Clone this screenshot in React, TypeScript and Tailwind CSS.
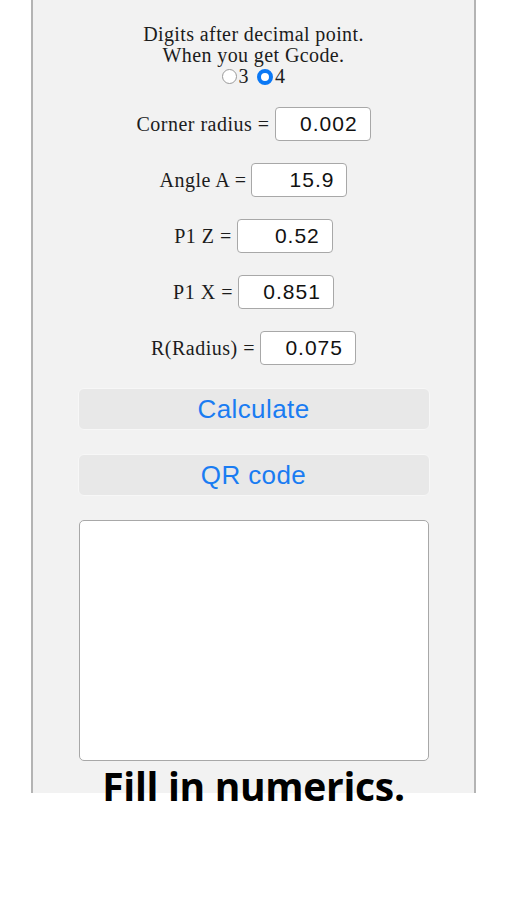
import React from 'react';

const serif = { fontFamily: '"Liberation Serif", "Times New Roman", serif' };
const sans = { fontFamily: '"Liberation Sans", Arial, sans-serif' };

const rows = [
  { label: 'Corner radius =', value: '0.002' },
  { label: 'Angle A =', value: '15.9' },
  { label: 'P1 Z =', value: '0.52' },
  { label: 'P1 X =', value: '0.851' },
  { label: 'R(Radius) =', value: '0.075' },
];

export default function App() {
  return (
    <div className="w-[507px] h-[900px] bg-white overflow-hidden">
      <div className="ml-[31px] w-[445px] h-[793px] bg-[#f2f2f2] border-x-2 border-[#b4b4b4] flex flex-col items-center pt-[24px]">
        <div className="text-[20px] leading-[21px] tracking-[0.4px] text-[#1c1c1c] text-center" style={serif}>
          <div>Digits after decimal point.</div>
          <div>When you get Gcode.</div>
          <div className="flex items-center justify-center gap-[2px]">
            <span className="w-[15px] h-[15px] rounded-full border border-[#9a9a9a] bg-white" />
            <span className="mr-[6px]">3</span>
            <span className="w-[16px] h-[16px] rounded-full border-[4px] border-[#0a78f5] bg-white" />
            <span>4</span>
          </div>
        </div>

        <div className="mt-[20px] flex flex-col gap-[22px]">
          {rows.map((r) => (
            <div key={r.label} className="flex items-center justify-center gap-[5px]">
              <span className="text-[20px] tracking-[0.5px] text-[#1c1c1c]" style={serif}>{r.label}</span>
              <div
                className="w-[96px] h-[34px] bg-white border border-[#a8a8a8] rounded-[4px] flex items-center justify-end pr-[12px] text-[21px] tracking-[1px] text-[#111]"
                style={sans}
              >
                {r.value}
              </div>
            </div>
          ))}
        </div>

        <div className="mt-[23px] flex flex-col gap-[24px] text-[26px] tracking-[0.4px] text-[#1a7cf2]" style={sans}>
          <div className="w-[352px] h-[42px] bg-[#e8e8e8] rounded-[6px] border border-[#f7f7f7] flex items-center justify-center">
            Calculate
          </div>
          <div className="w-[352px] h-[42px] bg-[#e8e8e8] rounded-[6px] border border-[#f7f7f7] flex items-center justify-center">
            QR code
          </div>
        </div>

        <div className="mt-[24px] w-[350px] h-[241px] bg-white border border-[#a8a8a8] rounded-[5px]" />
      </div>

      <div
        className="relative -mt-[30px] text-center text-[39px] leading-[46px] font-bold text-black tracking-[-0.3px]"
        style={{ fontFamily: '"Open Sans", "Noto Sans", sans-serif' }}
      >
        Fill in numerics.
      </div>
    </div>
  );
}
